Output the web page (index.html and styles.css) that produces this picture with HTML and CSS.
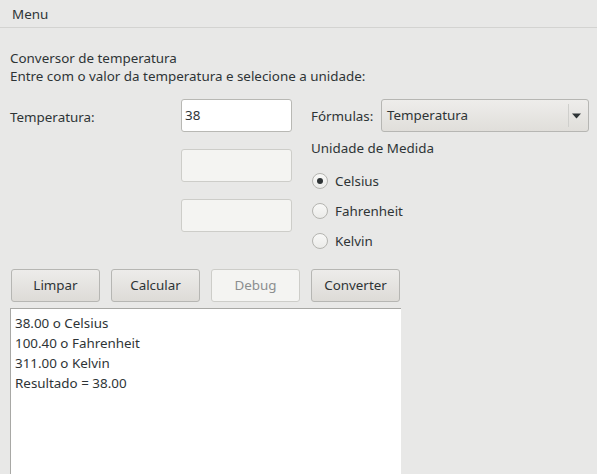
FILE: index.html
```html
<!DOCTYPE html>
<html lang="pt">
<head>
<meta charset="utf-8">
<title>Conversor de temperatura</title>
<link rel="stylesheet" href="styles.css">
</head>
<body>
<div class="menubar"><span class="menu-item">Menu</span></div>
<div class="content">
  <div class="intro">
    <p>Conversor de temperatura</p>
    <p>Entre com o valor da temperatura e selecione a unidade:</p>
  </div>
  <div class="form">
    <div class="left">
      <label class="field-label">Temperatura:</label>
      <div class="entry active">38</div>
      <div class="entry disabled"></div>
      <div class="entry disabled"></div>
    </div>
    <div class="right">
      <div class="combo-row">
        <span class="combo-label">Fórmulas:</span>
        <div class="combo">
          <span class="combo-text">Temperatura</span>
          <span class="combo-sep"></span>
          <svg class="combo-arrow" width="9" height="6" viewBox="0 0 9 6"><path d="M0 0.5 H9 L4.5 5.5 Z" fill="#2e3436"/></svg>
        </div>
      </div>
      <div class="group-label">Unidade de Medida</div>
      <div class="radio checked"><span class="dot"></span><span>Celsius</span></div>
      <div class="radio"><span class="dot"></span><span>Fahrenheit</span></div>
      <div class="radio"><span class="dot"></span><span>Kelvin</span></div>
    </div>
  </div>
  <div class="buttons">
    <div class="btn">Limpar</div>
    <div class="btn">Calcular</div>
    <div class="btn disabled">Debug</div>
    <div class="btn">Converter</div>
  </div>
  <div class="output">
    <div>38.00 o Celsius</div>
    <div>100.40 o Fahrenheit</div>
    <div>311.00 o Kelvin</div>
    <div>Resultado = 38.00</div>
  </div>
</div>
</body>
</html>
```

FILE: styles.css
```css
html, body {
  margin: 0;
  padding: 0;
  background: #e8e8e7;
  height: 100%;
  overflow: hidden;
}
body {
  font-family: "Noto Sans", "Open Sans", sans-serif;
  font-size: 13.4px;
  color: #2e3436;
  display: flex;
  flex-direction: column;
}
.menubar {
  height: 27px;
  flex: none;
  border-bottom: 1px solid #d3d3d1;
  display: flex;
  align-items: center;
  padding-left: 12px;
}
.content {
  padding-left: 10px;
  flex: 1;
  min-height: 0;
  display: flex;
  flex-direction: column;
}
.intro {
  margin-top: 21px;
}
.intro p {
  margin: 0;
  line-height: 18px;
}
.form {
  margin-top: 14px;
  display: flex;
  gap: 19px;
  height: 157px;
  flex: none;
}
.left {
  display: grid;
  grid-template-columns: 171px 111px;
  grid-template-rows: repeat(3, 33px);
  row-gap: 17px;
}
.field-label {
  grid-column: 1;
  grid-row: 1;
  align-self: center;
  padding-top: 3px;
}
.entry {
  grid-column: 2;
  box-sizing: border-box;
  border-radius: 3px;
  border: 1px solid #b8b8b4;
  background: #fff;
  line-height: 31px;
  padding-left: 3px;
}
.entry.disabled {
  background: #f4f4f2;
  border-color: #cdcdc9;
}
.right {
  display: flex;
  flex-direction: column;
}
.combo-row {
  display: flex;
  align-items: center;
  height: 33px;
}
.combo-label {
  width: 70px;
}
.combo {
  box-sizing: border-box;
  width: 208px;
  height: 33px;
  border: 1px solid #b6b6b3;
  border-radius: 3px;
  background: linear-gradient(#eeedeb, #e0deda);
  display: flex;
  align-items: center;
  padding-left: 5px;
}
.combo-text {
  flex: 1;
  padding-bottom: 2px;
}
.combo-sep {
  width: 1px;
  height: 23px;
  background: #cfcfcc;
  margin-right: 3px;
}
.combo-arrow {
  margin-right: 7px;
}
.group-label {
  margin-top: 7px;
  line-height: 18px;
}
.radio {
  height: 30px;
  display: flex;
  align-items: center;
  gap: 7px;
}
.group-label + .radio {
  margin-top: 9px;
}
.dot {
  box-sizing: border-box;
  width: 16px;
  height: 16px;
  margin-left: 1px;
  border-radius: 50%;
  border: 1px solid #b4b4b0;
  background: linear-gradient(#f8f8f7, #ebebe9);
  display: flex;
  align-items: center;
  justify-content: center;
}
.radio.checked .dot::after {
  content: "";
  width: 6px;
  height: 6px;
  border-radius: 50%;
  background: #2e3436;
}
.buttons {
  margin-top: 13px;
  display: flex;
  gap: 11px;
  padding-left: 1px;
  flex: none;
}
.btn {
  box-sizing: border-box;
  width: 89px;
  height: 33px;
  border: 1px solid #b6b6b3;
  border-radius: 3px;
  background: linear-gradient(#edecea, #dddbd7);
  display: flex;
  align-items: center;
  justify-content: center;
  padding-bottom: 1px;
}
.btn.disabled {
  background: #f4f4f2;
  border-color: #cdcdc9;
  color: #8b8e8f;
}
.output {
  margin-top: 6px;
  width: 391px;
  flex: 1;
  min-height: 0;
  box-sizing: border-box;
  background: #fff;
  border-top: 1px solid #a8a8a5;
  border-left: 1px solid #a8a8a5;
  padding: 4px 0 0 4px;
  line-height: 20px;
}
```
